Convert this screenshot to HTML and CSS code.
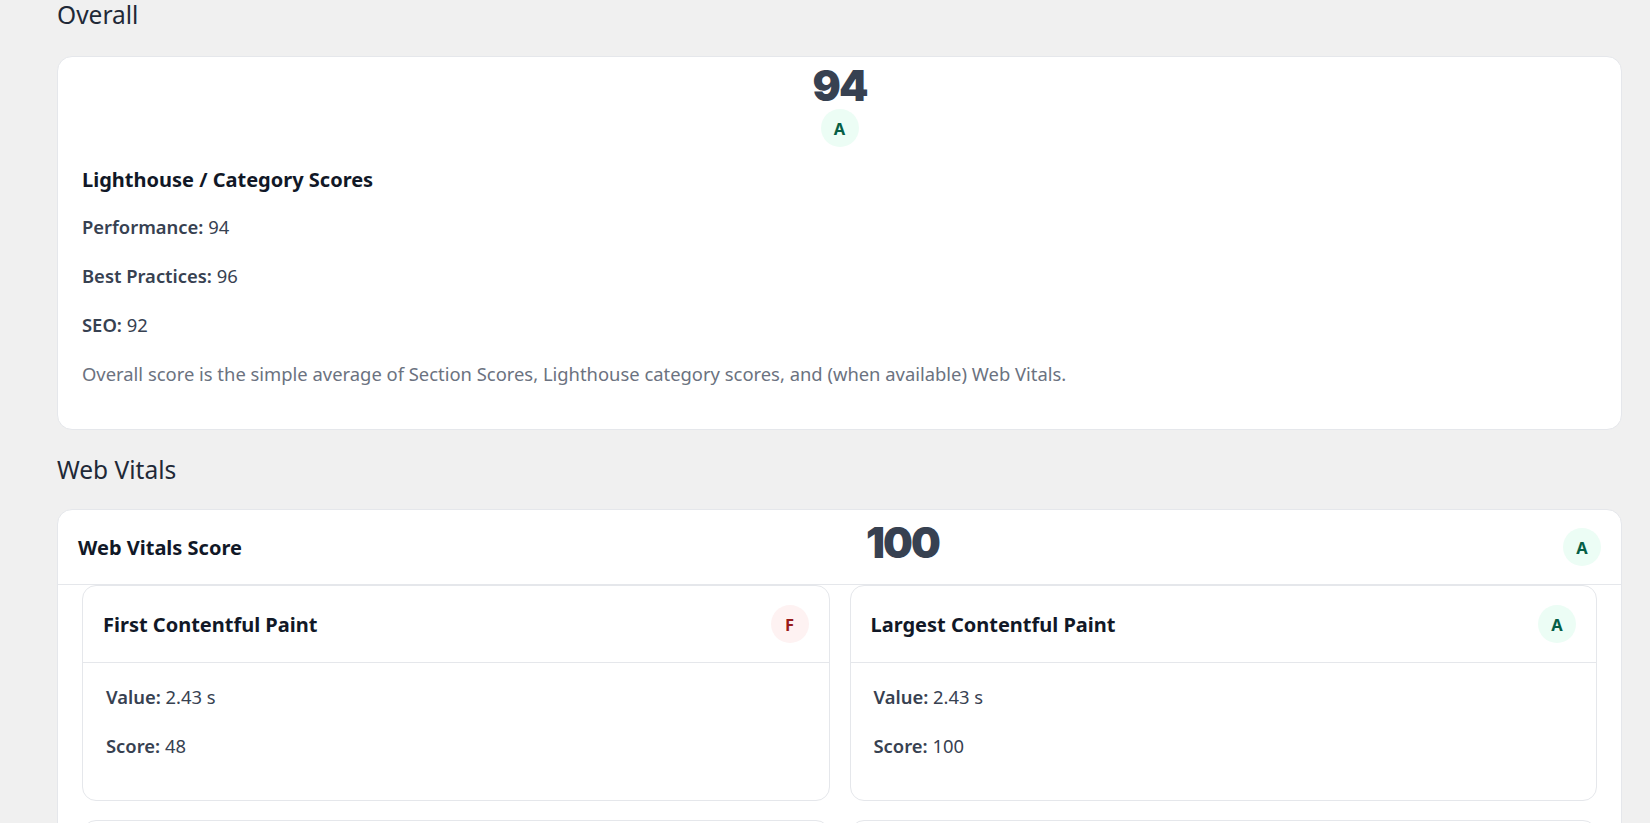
FILE: index.html
```html
<!DOCTYPE html>
<html lang="en">
<head>
    <meta charset="UTF-8">
    <meta name="viewport" content="width=device-width, initial-scale=1.0">
    <title>Site Report</title>
    <link rel="stylesheet" href="styles.css">
</head>
<body>

    <main class="report">
        <!-- Overall -->
        <section class="section">
            <h2 class="section-title">Overall</h2>
            <div class="card overall">
                <div class="overall-score">
                    <div class="big-score">94</div>
                    <span class="grade grade-a">A</span>
                </div>
                <h3 class="card-heading">Lighthouse / Category Scores</h3>
                <p><strong>Performance:</strong> 94</p>
                <p><strong>Best Practices:</strong> 96</p>
                <p><strong>SEO:</strong> 92</p>
                <p class="note">Overall score is the simple average of Section Scores, Lighthouse category scores, and (when available) Web Vitals.</p>
            </div>
        </section>

        <!-- Web Vitals -->
        <section class="section">
            <h2 class="section-title">Web Vitals</h2>
            <div class="card vitals">
                <div class="vitals-head">
                    <span class="card-title">Web Vitals Score</span>
                    <span class="big-score">100</span>
                    <span class="grade grade-a">A</span>
                </div>
                <div class="vitals-grid">
                    <div class="metric">
                        <div class="metric-head">
                            <span class="card-title">First Contentful Paint</span>
                            <span class="grade grade-f">F</span>
                        </div>
                        <div class="metric-body">
                            <p><strong>Value:</strong> 2.43 s</p>
                            <p><strong>Score:</strong> 48</p>
                        </div>
                    </div>
                    <div class="metric">
                        <div class="metric-head">
                            <span class="card-title">Largest Contentful Paint</span>
                            <span class="grade grade-a">A</span>
                        </div>
                        <div class="metric-body">
                            <p><strong>Value:</strong> 2.43 s</p>
                            <p><strong>Score:</strong> 100</p>
                        </div>
                    </div>
                    <div class="metric">
                        <div class="metric-head">
                            <span class="card-title">Total Blocking Time</span>
                            <span class="grade grade-a">A</span>
                        </div>
                        <div class="metric-body">
                            <p><strong>Value:</strong> 0 ms</p>
                            <p><strong>Score:</strong> 100</p>
                        </div>
                    </div>
                    <div class="metric">
                        <div class="metric-head">
                            <span class="card-title">Cumulative Layout Shift</span>
                            <span class="grade grade-a">A</span>
                        </div>
                        <div class="metric-body">
                            <p><strong>Value:</strong> 0</p>
                            <p><strong>Score:</strong> 100</p>
                        </div>
                    </div>
                </div>
            </div>
        </section>
    </main>

</body>
</html>
```

FILE: styles.css
```css
body {
    font-family: "Noto Sans", "Open Sans", sans-serif;
    background-color: #f0f0f0;
    color: #374151;
    margin: 0;
    padding: 0;
}
.report {
    padding: 0 28px 0 57px;
}
.section-title {
    font-size: 24.5px;
    font-weight: 400;
    color: #1f2937;
    line-height: 29px;
    margin: 0 0 27px;
}
.section + .section .section-title {
    margin: 25px 0 25px;
}
.card {
    background-color: #fff;
    border: 1px solid #e5e7eb;
    border-radius: 15px;
}
.grade {
    display: inline-flex;
    align-items: center;
    justify-content: center;
    width: 38px;
    height: 38px;
    border-radius: 50%;
    font-size: 16.5px;
    font-weight: 700;
}
.grade-a {
    background-color: #ecfdf5;
    color: #065f46;
}
.grade-f {
    background-color: #fef2f2;
    color: #991b1b;
}
.big-score {
    font-family: Inter, "Noto Sans", sans-serif;
    font-size: 42px;
    font-weight: 900;
    letter-spacing: -2px;
    line-height: 42px;
    color: #374151;
}
.card-title,
.card-heading {
    font-size: 20px;
    font-weight: 700;
    color: #111827;
}
/* Overall card */
.overall {
    padding: 8px 24px 42px;
}
.overall-score {
    display: flex;
    flex-direction: column;
    align-items: center;
    gap: 2px;
}
.card-heading {
    line-height: 28px;
    margin: 19px 0 20px;
}
.overall p,
.metric-body p {
    font-size: 18.4px;
    line-height: 26px;
    margin: 0 0 23px;
}
.overall p:last-child {
    margin-bottom: 0;
}
strong {
    font-weight: 600;
}
.note {
    color: #6b7280;
}
/* Web Vitals card */
.vitals-head {
    display: flex;
    justify-content: space-between;
    align-items: center;
    padding: 18px 20px;
    border-bottom: 1px solid #e5e7eb;
}
.vitals-head .big-score {
    line-height: 30px;
    margin-bottom: 8px;
}
.vitals-grid {
    display: grid;
    grid-template-columns: 1fr 1fr;
    gap: 19px 20px;
    padding: 0 24px 24px;
}
.metric {
    border: 1px solid #e5e7eb;
    border-radius: 14px;
}
.metric-head {
    display: flex;
    justify-content: space-between;
    align-items: center;
    padding: 19px 20px;
    border-bottom: 1px solid #e5e7eb;
}
.metric-body {
    padding: 21px 23px 18px;
}
```
